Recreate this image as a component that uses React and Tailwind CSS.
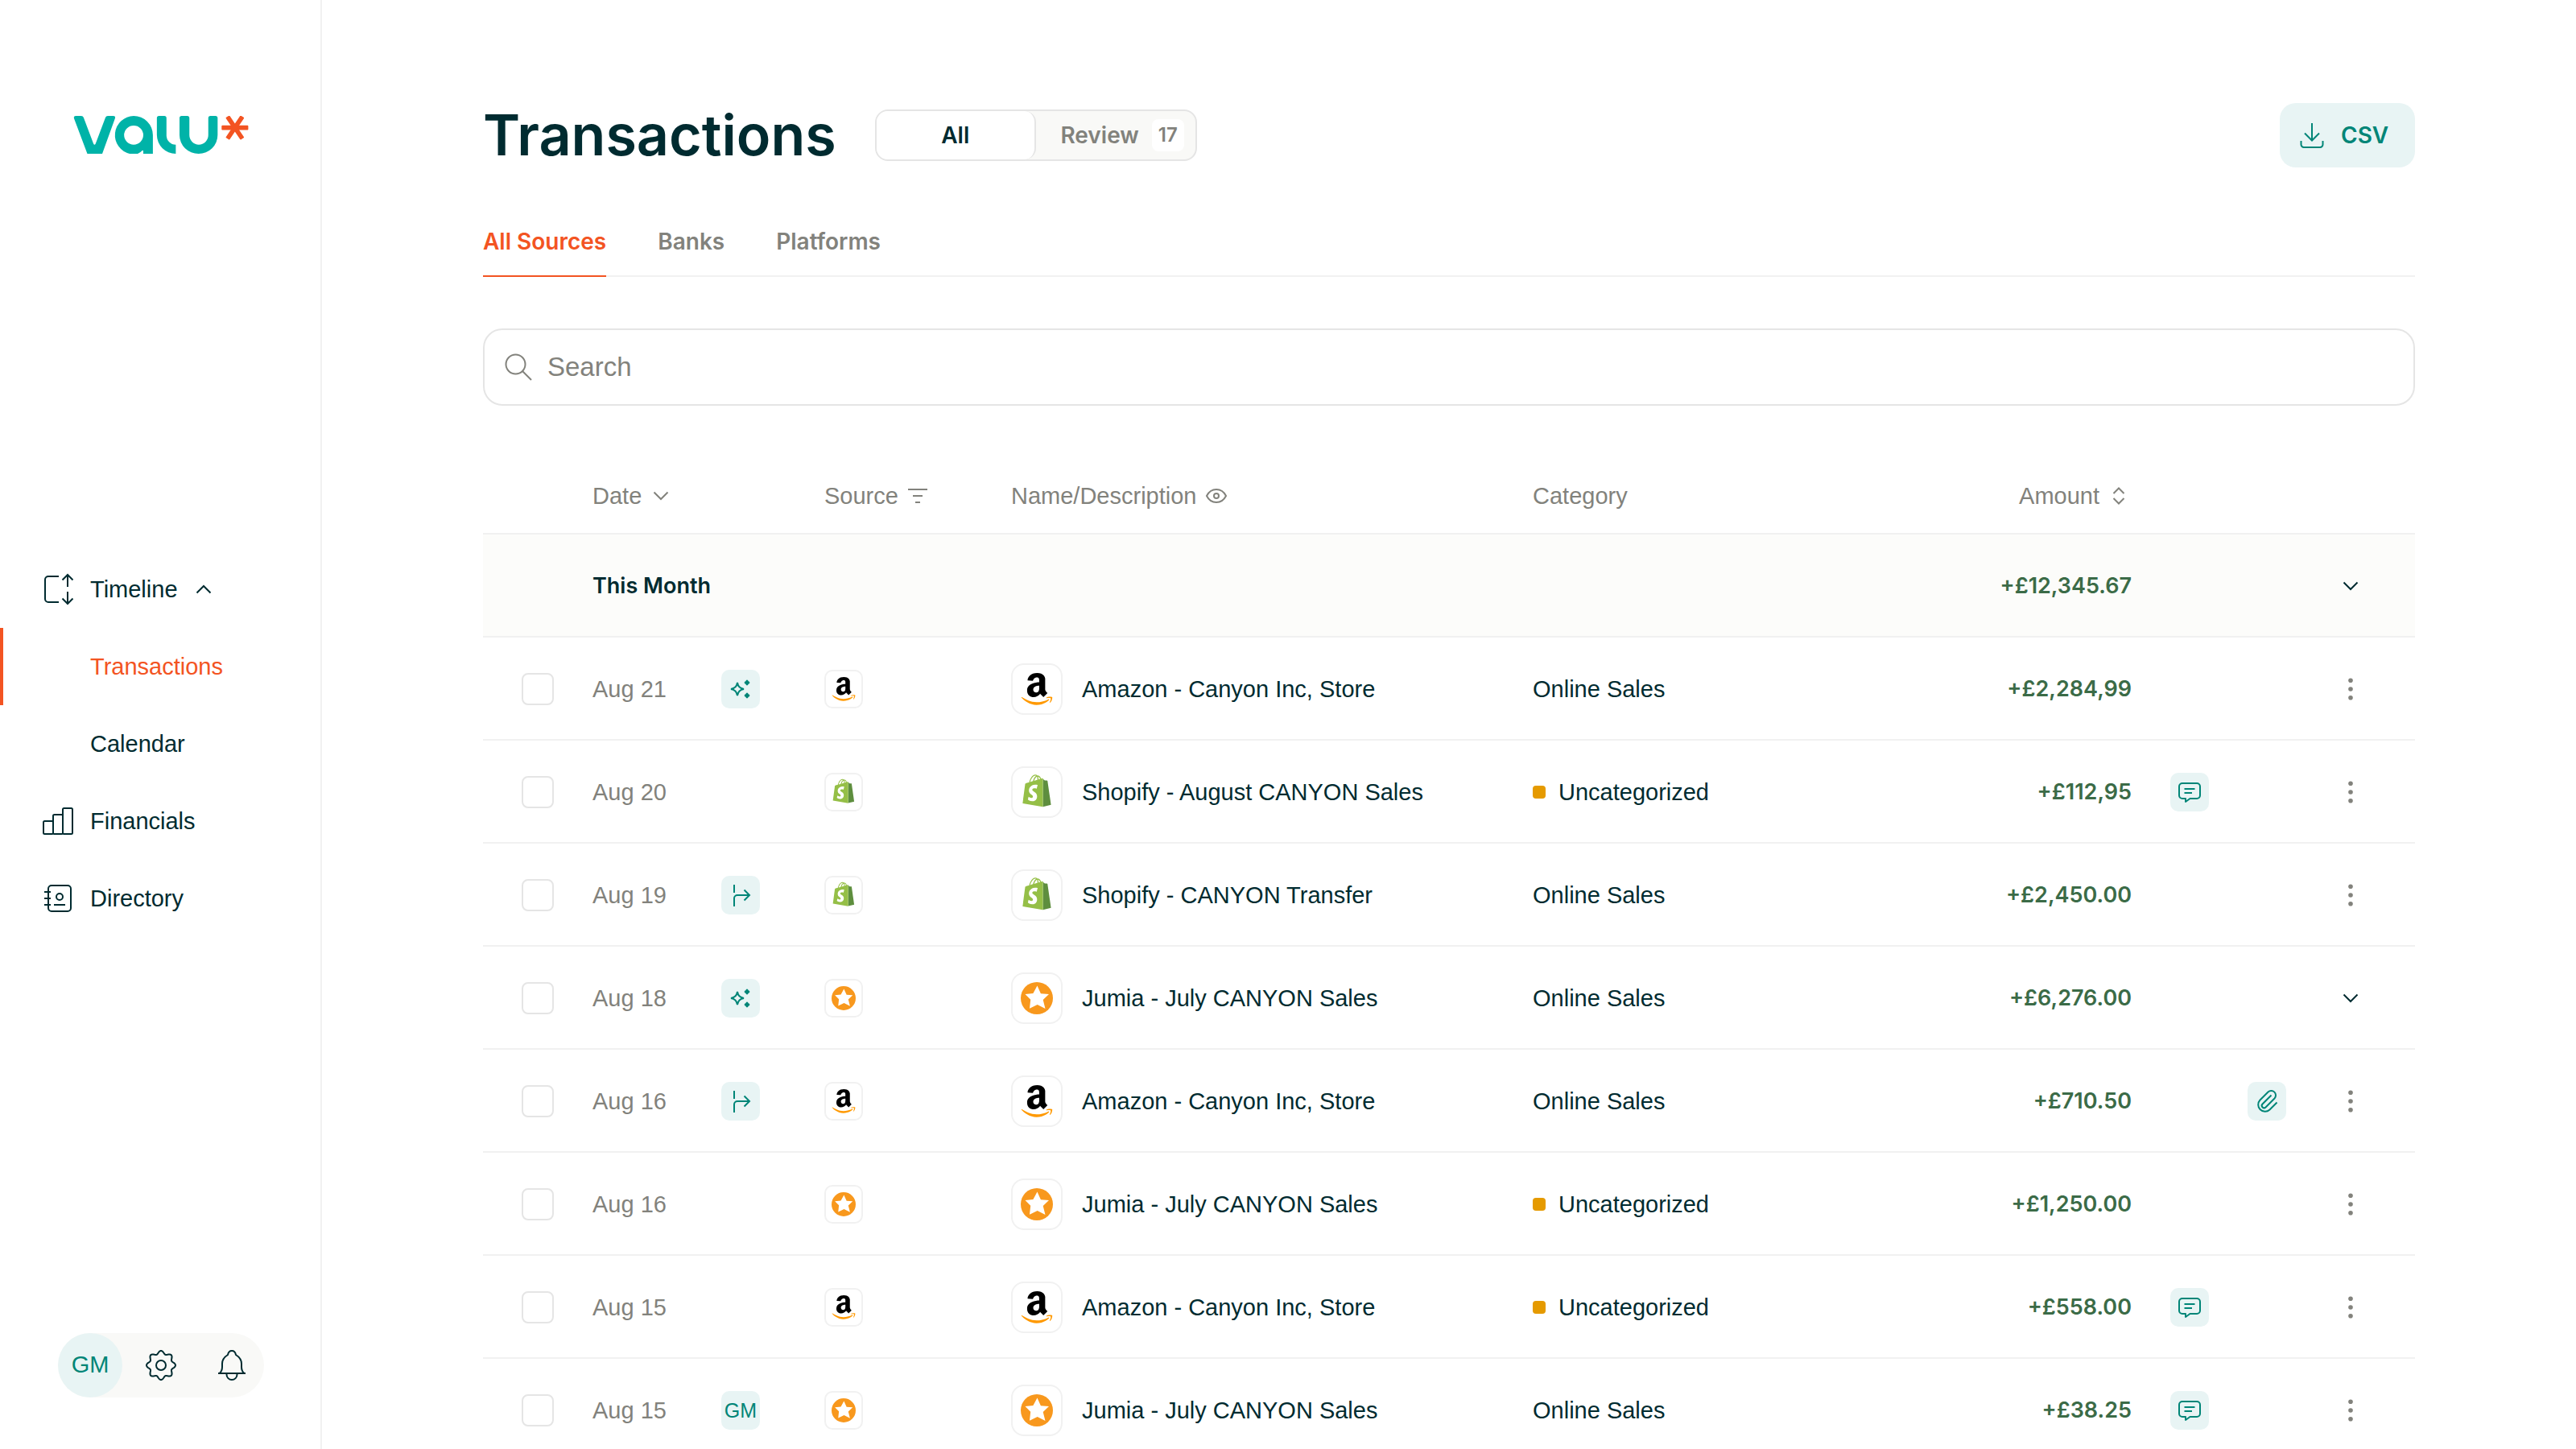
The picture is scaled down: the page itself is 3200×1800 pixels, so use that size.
const SANS = "font-['Liberation_Sans',Arial,sans-serif]";
const STRONG = "font-['Inter',sans-serif] font-semibold";

/* ---------- line icons ---------- */

function Icon({ size = 48, className = "", label, children }) {
  return (
    <svg
      viewBox={`0 0 ${size} ${size}`}
      width={size}
      height={size}
      fill="none"
      stroke="currentColor"
      strokeWidth="2"
      className={`shrink-0 ${className}`}
      role={label ? "img" : undefined}
      aria-label={label}
      aria-hidden={label ? undefined : true}
    >
      {children}
    </svg>
  );
}

const TimelineIcon = () => (
  <Icon>
    <path d="M25 8H12a4 4 0 0 0-4 4v24a4 4 0 0 0 4 4h13" />
    <path d="M36 21V6M29.5 12.5 36 6l6.5 6.5M36 27v15M29.5 35.5 36 42l6.5-6.5" />
  </Icon>
);

const FinancialsIcon = () => (
  <Icon>
    <rect x="6" y="24" width="12" height="16" rx="1.5" />
    <rect x="18" y="16" width="12" height="24" rx="1.5" />
    <rect x="30" y="8" width="12" height="32" rx="1.5" />
  </Icon>
);

const DirectoryIcon = () => (
  <Icon>
    <rect x="12" y="8" width="28" height="32" rx="4" />
    <path d="M7 16h8M7 24h8M7 32h8M19 32h14" />
    <circle cx="26" cy="22" r="4" />
  </Icon>
);

const gearOutline =
  Array.from({ length: 192 }, (_, i) => {
    const a = (i / 192) * Math.PI * 2;
    const r = 16.1 + 1.9 * Math.cos(8 * a);
    return `${i ? "L" : "M"}${(24 + r * Math.cos(a)).toFixed(2)} ${(24 + r * Math.sin(a)).toFixed(2)}`;
  }).join("") + "Z";

const GearIcon = () => (
  <Icon>
    <path d={gearOutline} />
    <circle cx="24" cy="24" r="6" />
  </Icon>
);

const BellIcon = () => (
  <Icon>
    <path d="M8.5 34c2.800-2 3.500-4.500 3.500-8v-4c0-5 3-8.500 7-11 .6-3 2.400-5 5-5s4.400 2 5 5c4 2.500 7 6 7 11v4c0 3.500.7 6 3.500 8M7 34h34M17.500 34v1.500a6.500 6.500 0 0 0 13 0V34" />
  </Icon>
);

const DownloadIcon = () => (
  <Icon size={32}>
    <path d="M16 1v22M7 13.5l9 9 9-9M2.500 23v4.500a3.500 3.500 0 0 0 3.500 3.500h20a3.500 3.500 0 0 0 3.500-3.500V23" />
  </Icon>
);

const SearchIcon = () => (
  <Icon size={40}>
    <circle cx="16.5" cy="16.5" r="12" />
    <path d="m25 25 11 11" />
  </Icon>
);

const ChevronDown = () => (
  <Icon size={32}>
    <path d="m7.5 11.500 8.500 8.500 8.500-8.500" />
  </Icon>
);

const ChevronUp = () => (
  <Icon size={32}>
    <path d="m7.500 20.500 8.500-8.500 8.500 8.500" />
  </Icon>
);

const FilterIcon = () => (
  <Icon size={32}>
    <path d="M4 8h24M10 16h12M13 24h6" />
  </Icon>
);

const EyeIcon = () => (
  <Icon size={32}>
    <path d="M4 16c2.500-5 7-8 12-8s9.500 3 12 8c-2.500 5-7 8-12 8s-9.500-3-12-8Z" />
    <circle cx="16" cy="16" r="3" />
  </Icon>
);

const SortIcon = () => (
  <Icon size={32}>
    <path d="M9.500 13 16 6.500l6.500 6.500M9.500 19l6.500 6.500 6.500-6.500" />
  </Icon>
);

const DotsIcon = () => (
  <Icon size={32}>
    <g fill="currentColor" stroke="none">
      <circle cx="16" cy="5.3" r="2.8" />
      <circle cx="16" cy="16" r="2.8" />
      <circle cx="16" cy="26.7" r="2.8" />
    </g>
  </Icon>
);

const CommentIcon = () => (
  <Icon>
    <path d="M15 13h18a4 4 0 0 1 4 4v11a4 4 0 0 1-4 4h-8.500L19 36v-4h-4a4 4 0 0 1-4-4V17a4 4 0 0 1 4-4ZM17.500 20h13M17.500 25h9.500" strokeLinejoin="round" />
  </Icon>
);

const ClipIcon = () => (
  <Icon>
    <path d="M29.500 16.500l-11 11a2.830 2.830 0 0 0 4 4l11-11a5.660 5.660 0 0 0-8-8l-10 10a8.490 8.490 0 0 0 12 12l9-9" />
  </Icon>
);

const SparkleIcon = () => (
  <Icon label="Categorised automatically">
    <path d="M20 16c.8 5 3 7.200 8 8-5 .8-7.200 3-8 8-.8-5-3-7.200-8-8 5-.8 7.200-3 8-8Z" />
    <path d="M32 13c.4 1.900 1.100 2.600 3 3-1.900.4-2.600 1.100-3 3-.4-1.900-1.100-2.600-3-3 1.900-.4 2.600-1.100 3-3ZM32 29c.4 1.900 1.100 2.600 3 3-1.900.4-2.600 1.100-3 3-.4-1.900-1.100-2.600-3-3 1.900-.4 2.600-1.100 3-3Z" fill="currentColor" strokeWidth="1.8" />
  </Icon>
);

const RuleIcon = () => (
  <Icon label="Matched by a rule">
    <path d="M16 11v10M16 38V28a4 4 0 0 1 4-4h15M28.500 17.500 35 24l-6.500 6.500" />
  </Icon>
);

/* ---------- logos ---------- */

const ValuLogo = () => (
  <svg viewBox="273 134 655 142" className="h-[47px] w-[218px]" role="img" aria-label="Valu">
    <g fill="#00b3a8">
      <path d="M281 134h20q7 0 9 6l37 98q4 8 8 0l37-98q2-6 9-6h20q10 0 7 9L380 276h-56L274 143q-2-9 7-9z" />
      <path
        fillRule="evenodd"
        d="M498 134a72 72 0 0 1 72 72v70h-36v-12h-4q-8 9-17 12h-30a72 72 0 0 1 15-142zm0 36a36 36 0 1 0 0 72 36 36 0 0 0 0-72z"
      />
      <path d="M593 134h20q8 0 8 8v64a35 35 0 0 0 35 36v34a71 71 0 0 1-71-70v-64q0-8 8-8z" />
      <path d="M678 134h21q8 0 8 8v64a35.500 36 0 0 0 71 0v-64q0-8 8-8h19q8 0 8 8v64a71.500 70 0 0 1-143 0v-64q0-8 8-8z" />
    </g>
    <g fill="#f35422">
      <rect x="828" y="169.5" width="100" height="17" rx="3" />
      <rect x="828" y="169.5" width="100" height="17" rx="3" transform="rotate(56 878 178)" />
      <rect x="828" y="169.5" width="100" height="17" rx="3" transform="rotate(-56 878 178)" />
    </g>
  </svg>
);

function AmazonLogo({ className }) {
  return (
    <svg viewBox="0 32 448 452" className={className} role="img" aria-label="Amazon">
      <path
        fill="#000"
        d="M257.2 162.7c-48.7 1.8-169.5 15.5-169.5 117.5 0 109.5 138.3 114 183.5 43.2 6.5 10.2 35.4 37.5 45.3 46.8l56.8-56S341 288.9 341 261.4V114.3C341 89 316.5 32 228.7 32 140.7 32 94 87 94 136.3l73.5 6.8c16.300-49.500 54.200-49.500 54.200-49.500 40.700-.1 35.500 29.800 35.500 69.100zm0 86.800c0 80-84.200 68-84.200 17.200 0-47.200 50.500-56.700 84.200-57.800v40.600z"
      />
      <path
        fill="#ff9900"
        d="M393.200 413c-7.700 10-70 67-174.500 67S34.200 408.500 9.700 379c-6.800-7.700 1-11.300 5.500-8.300C88.500 415.200 203 488.500 387.700 401c7.500-3.700 13.300 2 5.500 12zm39.800 2.200c-6.500 15.800-16 26.800-21.200 31-5.500 4.500-9.500 2.700-6.500-3.800s19.300-46.500 12.700-55c-6.500-8.300-37-4.300-48-3.200-10.800 1-13 2-14-.3-2.300-5.700 21.700-15.500 37.500-17.500 15.700-1.800 41-.8 46 5.700 3.700 5.100 0 27.100-6.500 43.100z"
      />
    </svg>
  );
}

function ShopifyLogo({ className }) {
  return (
    <svg viewBox="-24 30 496 496" className={`overflow-visible ${className}`} role="img" aria-label="Shopify">
      <path
        fill="#5e8e3e"
        d="M388.320,104.100a4.660,4.660,0,0,0-4.400-4c-2,0-37.230-.8-37.230-.8s-21.610-20.820-29.620-28.830V503.200L442.760,472S388.720,106.500,388.320,104.100Z"
      />
      <path
        fill="#95bf47"
        d="M288.650,70.470a116.670,116.670,0,0,0-7.210-17.610C271,32.850,255.420,22,237,22a15,15,0,0,0-4,.4c-.4-.8-1.200-1.200-1.600-2C223.400,11.630,213,7.630,200.580,8c-24,.8-48,18-67.250,48.830-13.610,21.620-24,48.840-26.820,70.060-27.620,8.400-46.830,14.410-47.230,14.810-14,4.400-14.410,4.800-16,18-1.200,10-38,291.820-38,291.820L317,504V65.670a41.660,41.660,0,0,0-13.500.4S297.860,67.670,288.650,70.470ZM233.410,87.690c-16,4.800-33.630,10.400-50.840,15.610,4.800-18.820,14.410-37.630,25.620-50,4.400-4.400,10.410-9.610,17.210-12.810C232.210,54.860,233.810,74.480,233.410,87.690ZM200.580,24.440A27.490,27.490,0,0,1,215,28c-6.400,3.200-12.810,8.410-18.810,14.410-15.210,16.420-26.820,42-31.620,66.450-14.420,4.410-28.830,8.810-42,12.810C131.330,83.280,163.750,25.240,200.580,24.440ZM249.420,82.880c0-12-1.600-29.220-7.210-43.630,18.420,3.600,27.220,24,31.230,36.430Q262.630,78.680,249.420,82.880Z"
      />
      <path
        fill="#fff"
        d="M154.150,244.610c1.600,25.610,69.250,31.220,73.250,91.660,2.800,47.640-25.220,80.060-65.650,82.470-48.830,3.200-75.650-25.620-75.650-25.620l10.400-44s26.820,20.420,48.440,18.820c14-.8,19.220-12.410,18.810-20.420-2-33.620-57.240-31.620-60.840-86.860-3.200-46.440,27.220-93.270,94.470-97.680,26-1.600,39.230,4.810,39.230,4.810L221.400,225.390s-17.210-8-37.630-6.400C154.150,221,153.750,239.800,154.150,244.610Z"
      />
    </svg>
  );
}

function JumiaLogo({ className }) {
  return (
    <svg viewBox="0 0 40 40" className={className} role="img" aria-label="Jumia">
      <circle cx="20" cy="20" r="20" fill="#f8981d" />
      <path fill="#fff" d="m20.500 4.500 4.400 9.800 10.100.6-7.300 7.200 2.800 10.900-9.800-4.900L11 32.700l1.200-10.900-6.700-6.900 9.900-1z" />
    </svg>
  );
}

const logos = { amazon: AmazonLogo, shopify: ShopifyLogo, jumia: JumiaLogo };

/* ---------- data ---------- */

const transactions = [
  { date: "Aug 21", tag: "ai", source: "amazon", name: "Amazon - Canyon Inc, Store", category: "Online Sales", amount: "+£2,284,99" },
  { date: "Aug 20", source: "shopify", name: "Shopify - August CANYON Sales", amount: "+£112,95", comment: true },
  { date: "Aug 19", tag: "rule", source: "shopify", name: "Shopify - CANYON Transfer", category: "Online Sales", amount: "+£2,450.00" },
  { date: "Aug 18", tag: "ai", source: "jumia", name: "Jumia - July CANYON Sales", category: "Online Sales", amount: "+£6,276.00", expandable: true },
  { date: "Aug 16", tag: "rule", source: "amazon", name: "Amazon - Canyon Inc, Store", category: "Online Sales", amount: "+£710.50", attachment: true },
  { date: "Aug 16", source: "jumia", name: "Jumia - July CANYON Sales", amount: "+£1,250.00" },
  { date: "Aug 15", source: "amazon", name: "Amazon - Canyon Inc, Store", amount: "+£558.00", comment: true },
  { date: "Aug 15", tag: "user", source: "jumia", name: "Jumia - July CANYON Sales", category: "Online Sales", amount: "+£38.25", comment: true },
];

/* ---------- sidebar ---------- */

function NavLink({ icon, active, children }) {
  return (
    <a
      href="#"
      aria-current={active ? "page" : undefined}
      className={`flex h-24 items-center gap-4 border-l-4 pl-11 ${active ? "border-[#f35422] text-[#f35422]" : "border-transparent"}`}
    >
      {icon ?? <span className="size-12" />}
      {children}
    </a>
  );
}

function Sidebar() {
  return (
    <aside className="flex w-[400px] shrink-0 flex-col justify-between border-r-2 border-[#f1f1f1] pt-36 pb-16">
      <a href="#" className="ml-[91px] block self-start">
        <ValuLogo />
      </a>
      <nav aria-label="Main" className="flex flex-col text-[29px] leading-10">
        <button type="button" aria-expanded="true" className="flex h-24 items-center gap-4 pl-12 text-left">
          <TimelineIcon />
          <span>Timeline</span>
          <ChevronUp />
        </button>
        <NavLink active>Transactions</NavLink>
        <NavLink>Calendar</NavLink>
        <NavLink icon={<FinancialsIcon />}>Financials</NavLink>
        <NavLink icon={<DirectoryIcon />}>Directory</NavLink>
      </nav>
      <div className="ml-18 flex gap-2 self-start rounded-full bg-[#f9f9f7]">
        <button type="button" className="size-20 rounded-full bg-[#e8f4f4] text-[29px] text-[#008577]">
          GM
        </button>
        <button type="button" aria-label="Settings" className="flex size-20 items-center justify-center">
          <GearIcon />
        </button>
        <button type="button" aria-label="Notifications" className="flex size-20 items-center justify-center">
          <BellIcon />
        </button>
      </div>
    </aside>
  );
}

/* ---------- page header ---------- */

function Header() {
  return (
    <header className="flex h-20 items-center justify-between">
      <div className="flex items-center gap-12">
        <h1 className={`${STRONG} text-[70px] leading-20`}>Transactions</h1>
        <div className={`${STRONG} flex h-16 w-[400px] rounded-2xl border-2 border-[#e5e5e5] bg-[#f9f9f7] text-[28px]`}>
          <button type="button" aria-pressed="true" className="w-1/2 shrink-0 rounded-[14px] border-r-2 border-[#e5e5e5] bg-white">
            All
          </button>
          <button type="button" aria-pressed="false" className="flex w-1/2 items-center justify-end gap-4 pr-3.5 text-[#82827c]">
            Review
            <span className="flex size-10 items-center justify-center rounded-lg bg-white text-2xl">17</span>
          </button>
        </div>
      </div>
      <button type="button" className={`${STRONG} flex h-20 min-w-42 items-center gap-5 rounded-[20px] bg-[#e8f4f4] px-6 text-[28px] text-[#008577]`}>
        <DownloadIcon />
        CSV
      </button>
    </header>
  );
}

function Tab({ active, children }) {
  return (
    <a
      href="#"
      aria-current={active ? "true" : undefined}
      className={`-mb-0.5 flex h-22 items-center border-b-2 pt-0.5 ${active ? "border-[#f35422] text-[#f35422]" : "border-transparent text-[#82827c]"}`}
    >
      {children}
    </a>
  );
}

/* ---------- table ---------- */

const chip = "flex size-12 items-center justify-center rounded-[10px]";

function Tag({ kind }) {
  if (!kind) return null;
  return (
    <span className={`${chip} bg-[#e8f4f4] text-[25px] text-[#008577]`}>
      {kind === "ai" && <SparkleIcon />}
      {kind === "rule" && <RuleIcon />}
      {kind === "user" && "GM"}
    </span>
  );
}

function Row({ row }) {
  const Logo = logos[row.source];
  return (
    <tr className="h-32">
      <td className="pl-12">
        <input
          type="checkbox"
          aria-label={`Select ${row.name}, ${row.date}`}
          className="block size-10 appearance-none rounded-lg border-2 border-[#e5e5e5] bg-white"
        />
      </td>
      <td className="text-[#82827c]">{row.date}</td>
      <td>
        <Tag kind={row.tag} />
      </td>
      <td>
        <span className={`${chip} border-2 border-[#f1f1f1]`}>
          <Logo className="size-[30px]" />
        </span>
      </td>
      <td>
        <div className="flex items-center gap-6">
          <span className="flex size-16 items-center justify-center rounded-2xl border-2 border-[#f1f1f1]">
            <Logo className="size-10" />
          </span>
          {row.name}
        </div>
      </td>
      <td>
        {row.category ?? (
          <span className="flex items-center gap-4">
            <span className="size-4 rounded bg-[#e59a00]" />
            Uncategorized
          </span>
        )}
      </td>
      <td className={`${STRONG} text-right text-[27px] text-[#3b6b47]`}>{row.amount}</td>
      <td className="pl-12">
        {row.comment && (
          <button type="button" aria-label="Comments" className={`${chip} bg-[#e8f4f4] text-[#008577]`}>
            <CommentIcon />
          </button>
        )}
      </td>
      <td>
        {row.attachment && (
          <button type="button" aria-label="Attachments" className={`${chip} bg-[#e8f4f4] text-[#008577]`}>
            <ClipIcon />
          </button>
        )}
      </td>
      <td>
        <button
          type="button"
          aria-label={row.expandable ? "Expand" : "More actions"}
          className={`flex size-20 items-center justify-center ${row.expandable ? "" : "text-[#82827c]"}`}
        >
          {row.expandable ? <ChevronDown /> : <DotsIcon />}
        </button>
      </td>
    </tr>
  );
}

function TransactionsTable() {
  return (
    <table className="mt-16 w-full table-fixed border-separate border-spacing-0 text-[29px] leading-10 [&_tr>*]:border-b-2 [&_tr>*]:border-[#f1f1f1] [&_tr>*]:pt-0.5">
      <colgroup>
        <col className="w-[136px]" />
        <col className="w-[160px]" />
        <col className="w-[128px]" />
        <col className="w-[232px]" />
        <col />
        <col className="w-[400px]" />
        <col className="w-[344px]" />
        <col className="w-[144px]" />
        <col className="w-[88px]" />
        <col className="w-[120px]" />
      </colgroup>
      <thead>
        <tr className="h-24 text-left text-[#82827c] [&_th]:font-normal">
          <td />
          <th colSpan={2} scope="col">
            <button type="button" className="flex items-center gap-2">
              Date <ChevronDown />
            </button>
          </th>
          <th scope="col">
            <button type="button" className="flex items-center gap-2">
              Source <FilterIcon />
            </button>
          </th>
          <th scope="col">
            <button type="button" className="flex items-center gap-2">
              Name/Description <EyeIcon />
            </button>
          </th>
          <th scope="col">Category</th>
          <th scope="col">
            <button type="button" className="ml-auto flex items-center gap-2">
              Amount <SortIcon />
            </button>
          </th>
          <td colSpan={3} />
        </tr>
      </thead>
      <tbody>
        <tr className="h-32 bg-[#fcfcfa]">
          <td />
          <th colSpan={5} scope="rowgroup" className={`${STRONG} text-left text-[27px]`}>
            This Month
          </th>
          <td className={`${STRONG} text-right text-[27px] text-[#3b6b47]`}>+£12,345.67</td>
          <td colSpan={2} />
          <td>
            <button type="button" aria-label="Collapse month" className="flex size-20 items-center justify-center">
              <ChevronDown />
            </button>
          </td>
        </tr>
        {transactions.map((row, i) => (
          <Row key={i} row={row} />
        ))}
      </tbody>
    </table>
  );
}

export default function App() {
  return (
    <div className={`${SANS} flex h-screen overflow-hidden bg-white text-[#002b30]`}>
      <Sidebar />
      <main className="min-w-0 flex-1 overflow-hidden px-[200px] pt-32">
        <Header />
        <nav aria-label="Sources" className={`${STRONG} mt-12 flex gap-16 border-b-2 border-[#f1f1f1] text-[28px]`}>
          <Tab active>All Sources</Tab>
          <Tab>Banks</Tab>
          <Tab>Platforms</Tab>
        </nav>
        <label className="mt-16 flex h-24 items-center gap-4 rounded-3xl border-2 border-[#e5e5e5] px-[22px] text-[#82827c]">
          <SearchIcon />
          <input
            type="search"
            aria-label="Search"
            placeholder="Search"
            className="h-full flex-1 bg-transparent text-[33px] outline-none placeholder:text-[#82827c]"
          />
        </label>
        <TransactionsTable />
      </main>
    </div>
  );
}
